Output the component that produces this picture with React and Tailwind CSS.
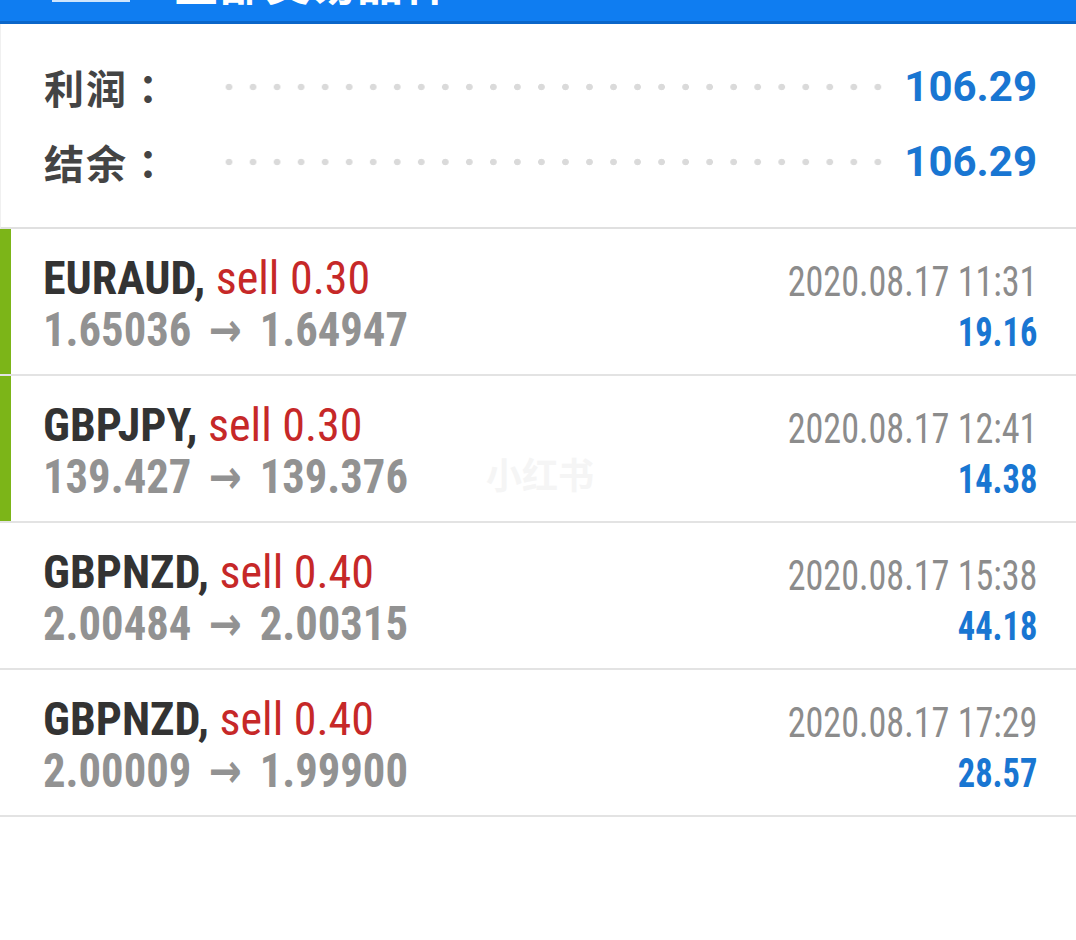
const trades = [
  { symbol: "EURAUD", side: "sell 0.30", open: "1.65036", close: "1.64947", time: "2020.08.17 11:31", profit: "19.16", mark: true },
  { symbol: "GBPJPY", side: "sell 0.30", open: "139.427", close: "139.376", time: "2020.08.17 12:41", profit: "14.38", mark: true },
  { symbol: "GBPNZD", side: "sell 0.40", open: "2.00484", close: "2.00315", time: "2020.08.17 15:38", profit: "44.18", mark: false },
  { symbol: "GBPNZD", side: "sell 0.40", open: "2.00009", close: "1.99900", time: "2020.08.17 17:29", profit: "28.57", mark: false },
]

const summary = [
  { label: "利润：", value: "106.29" },
  { label: "结余：", value: "106.29" },
]

const cjk = { fontFamily: '"Noto Sans CJK TC", "Noto Sans CJK SC", "Noto Sans", sans-serif' }
const cond = { fontFamily: '"Roboto Condensed", Roboto, sans-serif', fontStretch: "condensed" }

function SummaryRow({ label, value }) {
    return (
        <div className="flex items-center h-[75px]">
            <span className="w-[173px] shrink-0 text-[40px] font-bold text-[#444] leading-none tracking-[2px]" style={cjk}>
                {label}
            </span>
            <div className="flex-1 h-[8px] bg-[radial-gradient(circle,#dadada_3px,transparent_3.6px)] bg-[length:24.04px_8px] bg-repeat-x"></div>
            <span className="ml-[22px] text-[42px] font-bold text-[#1976d2] leading-none font-['Roboto',sans-serif]">
                {value}
            </span>
        </div>
    )
}

function TradeRow({ t }) {
    return (
        <div className="flex h-[147px] border-b-2 border-[#e3e3e3]">
            <div className={`w-[11px] shrink-0 ${t.mark ? "bg-[#7cb518]" : "bg-transparent"}`}></div>
            <div className="flex-1 flex justify-between pl-[32px] pr-[39px]">
                <div className="pt-[23px] whitespace-nowrap" style={cond}>
                    <div className="text-[46px] leading-[52px]">
                        <span className="font-bold text-[#333]">{t.symbol},</span>
                        <span className="text-[#c62828]"> {t.side}</span>
                    </div>
                    <div className="text-[48px] leading-[52px] font-bold text-[#929292] origin-left scale-x-[0.93]">
                        {t.open}
                        <span className="inline-block mx-[19px] text-[47px] leading-none font-['DejaVu_Sans',sans-serif] font-bold">→</span>
                        {t.close}
                    </div>
                </div>
                <div className="pt-[27px] flex flex-col items-end origin-right scale-x-[0.86] whitespace-nowrap" style={cond}>
                    <div className="text-[42px] leading-[52px] text-[#8c8c8c]">{t.time}</div>
                    <div className="text-[40px] leading-[50px] font-bold text-[#1976d2]">{t.profit}</div>
                </div>
            </div>
        </div>
    )
}

export default function App() {
    return (
        <div className="relative w-[1076px] h-[940px] bg-white overflow-hidden">
            {/* top bar, cut off by the screenshot */}
            <div className="h-[24px] bg-[#0f7df1] border-b-[3px] border-[#0b66c9] overflow-hidden flex items-start">
                <div className="ml-[52px] w-[78px] h-[2px] bg-white/80 shrink-0"></div>
                <span className="ml-[43px] -mt-[43px] text-[46px] leading-[46px] font-bold text-white whitespace-nowrap" style={cjk}>
                    全部交易品种
                </span>
            </div>

            {/* 汇总 */}
            <div className="pl-[43px] pr-[39px] pt-[25px] pb-[28px] border-l border-[#f0f0f0] border-b-2 border-b-[#e0e0e0]">
                {summary.map((s) => (
                    <SummaryRow key={s.label} {...s} />
                ))}
            </div>

            {/* 订单列表 */}
            <div>
                {trades.map((t, i) => (
                    <TradeRow key={i} t={t} />
                ))}
            </div>

            {/* 水印 */}
            <span className="absolute left-[486px] top-[455px] text-[36px] font-bold text-[#f5f5f5] leading-none" style={cjk}>
                小红书
            </span>
        </div>
    )
}
